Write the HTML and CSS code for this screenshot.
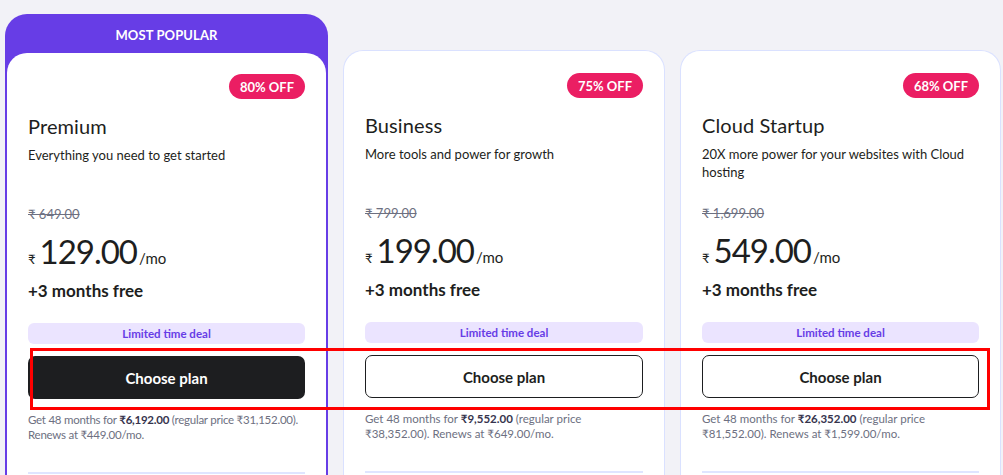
FILE: index.html
```html
<!DOCTYPE html>
<html lang="en">
<head>
<meta charset="utf-8">
<title>Plans</title>
<link rel="stylesheet" href="styles.css">
</head>
<body>
<main class="plans">
  <div class="popular">
    <div class="popular-label">MOST POPULAR</div>
    <section class="card card--featured">
      <div class="badge-row"><span class="badge">80% OFF</span></div>
      <h2 class="title">Premium</h2>
      <p class="desc">Everything you need to get started</p>
      <div class="old-price">₹ 649.00</div>
      <div class="price"><span class="cur">₹</span><span class="amount">129.00</span><span class="per">/mo</span></div>
      <div class="free">+3 months free</div>
      <div class="deal">Limited time deal</div>
      <button class="btn btn--dark">Choose plan</button>
      <p class="terms terms--tight">Get 48 months for <b>₹6,192.00</b> (regular price ₹31,152.00). Renews at ₹449.00/mo.</p>
      <hr class="divider">
    </section>
  </div>

  <section class="card card--plain">
    <div class="badge-row"><span class="badge">75% OFF</span></div>
    <h2 class="title">Business</h2>
    <p class="desc">More tools and power for growth</p>
    <div class="old-price">₹ 799.00</div>
    <div class="price"><span class="cur">₹</span><span class="amount">199.00</span><span class="per">/mo</span></div>
    <div class="free">+3 months free</div>
    <div class="deal">Limited time deal</div>
    <button class="btn btn--light">Choose plan</button>
    <p class="terms">Get 48 months for <b>₹9,552.00</b> (regular price ₹38,352.00). Renews at ₹649.00/mo.</p>
    <hr class="divider">
  </section>

  <section class="card card--plain">
    <div class="badge-row"><span class="badge">68% OFF</span></div>
    <h2 class="title">Cloud Startup</h2>
    <p class="desc">20X more power for your websites with Cloud hosting</p>
    <div class="old-price">₹ 1,699.00</div>
    <div class="price"><span class="cur">₹</span><span class="amount">549.00</span><span class="per">/mo</span></div>
    <div class="free">+3 months free</div>
    <div class="deal">Limited time deal</div>
    <button class="btn btn--light">Choose plan</button>
    <p class="terms">Get 48 months for <b>₹26,352.00</b> (regular price ₹81,552.00). Renews at ₹1,599.00/mo.</p>
    <hr class="divider">
  </section>

  <div class="highlight" aria-hidden="true"></div>
</main>
</body>
</html>
```

FILE: styles.css
```css
* { box-sizing: border-box; }

html, body {
  margin: 0;
  padding: 0;
  background: #f2f2f7;
  overflow: hidden;
  height: 475px;
}

body {
  font-family: Lato, "Noto Sans", "DejaVu Sans", sans-serif;
  color: #1d1e20;
}

.plans {
  position: relative;
  display: grid;
  grid-template-columns: 323px 322px 321px;
  column-gap: 15px;
  align-items: start;
  padding: 14px 0 0 5px;
}

.popular {
  background: #673de6;
  border-radius: 22px 22px 0 0;
  padding: 0 2px;
}

.popular-label {
  height: 39px;
  padding-top: 2px;
  display: flex;
  align-items: center;
  justify-content: center;
  color: #fff;
  font-size: 13px;
  font-weight: 700;
  letter-spacing: 0.1px;
}

.card {
  background: #fff;
  border-radius: 20px 20px 0 0;
  padding: 22px 21px 0;
  min-height: 480px;
}

.card--featured {
  padding-top: 21px;
}

.card--plain {
  margin-top: 36px;
  border: 1px solid #dae1ff;
  border-bottom: none;
}

.badge-row {
  display: flex;
  justify-content: flex-end;
}

.badge {
  display: inline-flex;
  align-items: center;
  height: 25px;
  padding: 0 11px;
  border-radius: 13px;
  background: #eb1e63;
  color: #fff;
  font-size: 13px;
  font-weight: 700;
}

.title {
  margin: 13px 0 0;
  font-size: 20px;
  line-height: 28px;
  font-weight: 400;
  letter-spacing: 0.1px;
}

.desc {
  margin: 6px 0 0;
  font-size: 13px;
  line-height: 18px;
  min-height: 36px;
}

.old-price {
  margin-top: 22px;
  font-size: 13px;
  line-height: 20px;
  color: #6d7081;
  text-decoration: line-through;
}

.price {
  margin-top: 7px;
  height: 40px;
  display: flex;
  align-items: baseline;
}

.cur {
  font-size: 13px;
  margin-right: 4px;
}

.amount {
  font-size: 33px;
  line-height: 40px;
  font-weight: 400;
  letter-spacing: -1px;
}

.per {
  font-size: 15px;
  margin-left: 2px;
}

.free {
  margin-top: 9px;
  font-size: 17px;
  line-height: 22px;
  font-weight: 700;
}

.deal {
  margin-top: 21px;
  height: 21px;
  border-radius: 6px;
  background: #ebe4ff;
  color: #673de6;
  font-size: 11.5px;
  font-weight: 700;
  display: flex;
  align-items: center;
  justify-content: center;
}

.btn {
  display: block;
  width: 100%;
  margin-top: 12px;
  height: 43px;
  border-radius: 7px;
  font-family: inherit;
  font-size: 15px;
  font-weight: 700;
  cursor: pointer;
}

.btn--dark {
  background: #1d1e20;
  color: #fff;
  border: none;
}

.btn--light {
  background: #fff;
  color: #1d1e20;
  border: 1.5px solid #1d1e20;
}

.terms {
  margin: 13px 0 0;
  font-size: 11.5px;
  line-height: 15px;
  color: #6d7081;
}

.terms--tight {
  letter-spacing: -0.25px;
}

.terms b {
  color: #36344d;
  font-weight: 700;
}

.divider {
  margin: 30px 0 0;
  border: none;
  height: 2px;
  background: #dfe5ff;
}

.highlight {
  position: absolute;
  left: 30px;
  top: 348px;
  width: 960px;
  height: 62px;
  border: 3px solid #ff0000;
  pointer-events: none;
}
```
